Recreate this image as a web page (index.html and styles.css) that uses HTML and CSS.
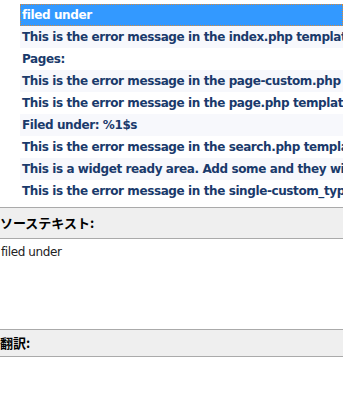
FILE: index.html
```html
<!DOCTYPE html>
<html lang="ja">
<head>
    <meta charset="UTF-8">
    <title>翻訳</title>
    <link rel="stylesheet" href="styles.css">
</head>
<body>
    <div class="string-list">
        <ul>
            <li class="selected">filed under</li>
            <li class="alt">This is the error message in the index.php template.</li>
            <li>Pages:</li>
            <li class="alt">This is the error message in the page-custom.php template.</li>
            <li>This is the error message in the page.php template.</li>
            <li class="alt">Filed under: %1$s</li>
            <li>This is the error message in the search.php template.</li>
            <li class="alt">This is a widget ready area. Add some and they will appear here.</li>
            <li>This is the error message in the single-custom_type.php template.</li>
        </ul>
    </div>
    <div class="panel-header">ソーステキスト:</div>
    <div class="source-text">filed under</div>
    <div class="panel-header small">翻訳:</div>
    <div class="translation"></div>
</body>
</html>
```
FILE: styles.css
```css
body {
    margin: 0;
    background-color: #fff;
    font-family: "DejaVu Sans", Tahoma, "Noto Sans CJK JP", sans-serif;
    overflow: hidden;
}
.string-list {
    height: 207px;
    padding: 4px 0 0 20px;
    box-sizing: border-box;
    overflow: hidden;
}
.string-list ul {
    list-style: none;
    margin: 0;
    padding: 0;
}
.string-list li {
    height: 22px;
    line-height: 22px;
    padding-left: 2px;
    font-size: 12px;
    letter-spacing: -0.4px;
    font-weight: bold;
    color: #1a3a6b;
    white-space: nowrap;
    overflow: hidden;
    box-sizing: border-box;
}
.string-list li.alt {
    background-color: #f7f8fc;
}
.string-list li.selected {
    background-color: #3399ff;
    color: #fff;
    border: 1px dotted #d98a3a;
    line-height: 20px;
    padding-left: 1px;
}
.panel-header {
    height: 32px;
    line-height: 30px;
    background-color: #efefef;
    border-top: 1px solid #aaa;
    border-bottom: 1px solid #aaa;
    box-sizing: border-box;
    font-size: 13px;
    font-weight: bold;
    color: #000;
    font-family: "Noto Sans CJK JP", sans-serif;
}
.panel-header.small {
    height: 28px;
    line-height: 26px;
}
.source-text {
    height: 90px;
    padding: 6px 0 0 1px;
    box-sizing: border-box;
    font-size: 12px;
    letter-spacing: -0.4px;
    color: #222;
}
.translation {
    height: 60px;
}
```
